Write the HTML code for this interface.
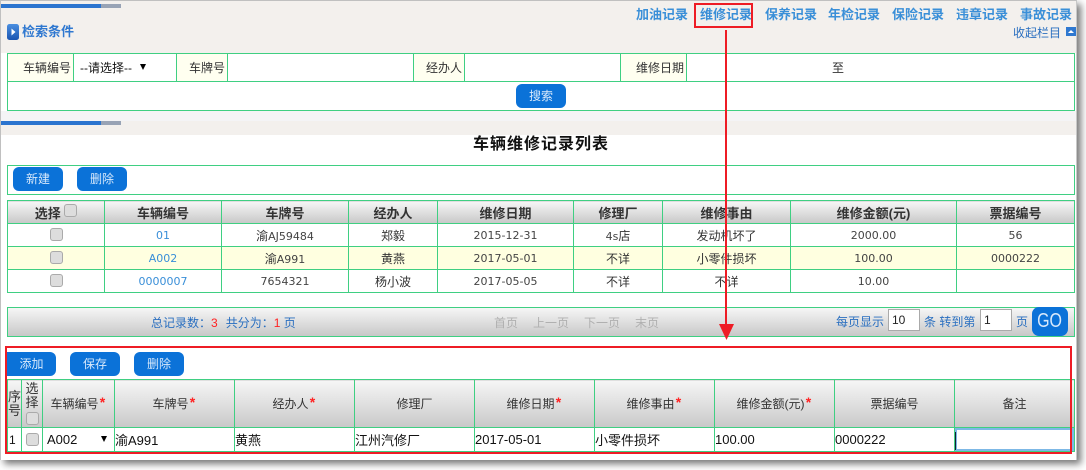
<!DOCTYPE html>
<html lang="zh">
<head>
<meta charset="utf-8">
<title>车辆维修记录列表</title>
<style>
html,body{margin:0;padding:0;width:1086px;height:470px;overflow:hidden;background:#fff}
body{font:12px "Liberation Sans","WenQuanYi Zen Hei","Noto Sans CJK SC",sans-serif;color:#333;position:relative}
.a{position:absolute;white-space:nowrap}
#page{position:absolute;left:0;top:0;width:1075px;height:459px;background:#fff;border-left:1px solid #c0c0c0;border-top:1px solid #c0c0c0;border-right:1px solid #c8c8c8;box-shadow:4px 4px 7px #777}
.bar{position:absolute;left:1px;width:120px;height:4px;background:linear-gradient(to right,#2b74cf 0,#2b74cf 100px,#98a3b5 100px,#98a3b5 120px)}
.btn{position:absolute;width:50px;height:24px;line-height:24px;background:#0b72d8;color:#d8e9fb;border-radius:6px;text-align:center;font-size:12px}
.link{position:absolute;top:7px;font-weight:bold;font-size:13px;line-height:16px;color:#3a8fd8;white-space:nowrap}
table{position:absolute;border-collapse:collapse;table-layout:fixed;left:7px}
td,th{border:1px solid #3fcf82;padding:0;text-align:center;overflow:hidden;white-space:nowrap;font-size:12px;font-weight:normal}
.lb{background:#fffff0;text-align:right;padding-right:2px}
.hd th{background:linear-gradient(#f6f6f6,#c8c8c8);font-weight:bold;font-size:13px;color:#333}
.hd2 th{background:linear-gradient(#f6f6f6,#c8c8c8);color:#333;font-weight:normal}
.y td{background:#ffffe0}
.n{font:11px "DejaVu Sans",sans-serif;color:#444}
.b{color:#3a8fd8}
.cb{display:inline-block;width:11px;height:11px;background:#ddd;border:1px solid #aaa;border-radius:3px;vertical-align:middle;position:relative;top:-1px}
.t2 td{text-align:left;color:#111;font-size:13px}
.m{font-size:12.4px}
.r{color:#f22}
.star{display:inline-block;width:8px;text-align:center;color:#f22;font-weight:bold;font-size:14px;line-height:10px;vertical-align:1px}
.tri{position:absolute;width:0;height:0;border-left:3px solid transparent;border-right:3px solid transparent;border-top:6px solid #000}
.inp{position:absolute;background:#fff;border:1px solid #aaa;height:20px;line-height:20px;width:27px;padding-left:3px;box-sizing:content-box;color:#222;font-size:12px}
.pg{color:#2a6fc0}
.dis{color:#b0b0b0}
</style>
</head>
<body>
<div id="page"></div>

<div class="a" style="left:1px;top:1px;width:1075px;height:52px;background:#f3f0ed"></div>
<div class="a" style="left:1px;top:111px;width:1075px;height:10px;background:#f4f4f6"></div>
<div class="a" style="left:1px;top:121px;width:1075px;height:14px;background:#f3f0ed"></div>
<div class="bar" style="top:4px"></div>
<div class="bar" style="top:121px"></div>

<svg class="a" style="left:7px;top:24px" width="12" height="17" viewBox="0 0 12 17">
<defs><linearGradient id="ig" x1="0" y1="0" x2="0" y2="1"><stop offset="0" stop-color="#4a8fe0"/><stop offset="1" stop-color="#1a55b0"/></linearGradient></defs>
<rect x="0" y="0" width="12" height="16" rx="2.5" fill="url(#ig)"/>
<path d="M4.5 4.5 L8.5 8 L4.5 11.5 Z" fill="#fff"/>
</svg>
<div class="a" style="left:22px;top:24px;font-weight:bold;font-size:13px;line-height:16px;color:#2f78d0">检索条件</div>

<div class="link" style="left:636px">加油记录</div>
<div class="link" style="left:700px">维修记录</div>
<div class="link" style="left:765px">保养记录</div>
<div class="link" style="left:828px">年检记录</div>
<div class="link" style="left:892px">保险记录</div>
<div class="link" style="left:956px">违章记录</div>
<div class="link" style="left:1020px">事故记录</div>
<div class="a" style="left:1013px;top:25px;line-height:16px;color:#2a6fc0">收起栏目</div>
<svg class="a" style="left:1066px;top:27px" width="10" height="9" viewBox="0 0 10 9"><rect width="10" height="9" fill="#2f78d0"/><path d="M2 6 L5 3 L8 6 Z" fill="#fff"/></svg>

<table style="top:53px;width:1068px;background:#fff">
<colgroup><col style="width:66px"><col style="width:103px"><col style="width:51px"><col style="width:186px"><col style="width:51px"><col style="width:156px"><col style="width:66px"><col style="width:388px"></colgroup>
<tr style="height:28px"><td class="lb">车辆编号</td><td style="text-align:left;padding-left:6px;color:#111">--请选择--</td><td class="lb">车牌号</td><td></td><td class="lb">经办人</td><td></td><td class="lb">维修日期</td><td style="padding-right:85px">至</td></tr>
<tr style="height:29px"><td colspan="8"></td></tr>
</table>
<div class="tri" style="left:140px;top:64px"></div>
<div class="btn" style="left:516px;top:84px">搜索</div>

<div class="a" style="left:441px;width:200px;top:135px;text-align:center;font-weight:bold;font-size:16px;line-height:20px;color:#111;letter-spacing:1px">车辆维修记录列表</div>

<div class="a" style="left:7px;top:165px;width:1066px;height:28px;border:1px solid #3fcf82"></div>
<div class="btn" style="left:13px;top:167px">新建</div>
<div class="btn" style="left:77px;top:167px">删除</div>

<table style="top:200px;width:1068px">
<colgroup><col style="width:97px"><col style="width:117px"><col style="width:127px"><col style="width:89px"><col style="width:136px"><col style="width:89px"><col style="width:128px"><col style="width:166px"><col style="width:118px"></colgroup>
<tr class="hd" style="height:23px"><th>选择 <span class="cb" style="top:-4px"></span></th><th>车辆编号</th><th>车牌号</th><th>经办人</th><th>维修日期</th><th>修理厂</th><th>维修事由</th><th>维修金额(元)</th><th>票据编号</th></tr>
<tr style="height:23px"><td><span class="cb"></span></td><td><span class="n b">01</span></td><td>渝<span class="n">AJ59484</span></td><td>郑毅</td><td><span class="n">2015-12-31</span></td><td><span class="n">4s</span>店</td><td>发动机坏了</td><td><span class="n">2000.00</span></td><td><span class="n">56</span></td></tr>
<tr class="y" style="height:23px"><td><span class="cb"></span></td><td><span class="n b">A002</span></td><td>渝<span class="n">A991</span></td><td>黄燕</td><td><span class="n">2017-05-01</span></td><td>不详</td><td>小零件损坏</td><td><span class="n">100.00</span></td><td><span class="n">0000222</span></td></tr>
<tr style="height:23px"><td><span class="cb"></span></td><td><span class="n b">0000007</span></td><td><span class="n">7654321</span></td><td>杨小波</td><td><span class="n">2017-05-05</span></td><td>不详</td><td>不详</td><td><span class="n">10.00</span></td><td></td></tr>
</table>

<div class="a" style="left:7px;top:307px;width:1066px;height:28px;border:1px solid #3fcf82;background:linear-gradient(#f6f6f6,#c8c8c8)"></div>
<div class="a pg" style="left:151px;top:315px;line-height:16px">总记录数：<span class="r">3</span><span style="margin-left:8px">共分为：</span><span class="r">1</span> 页</div>
<div class="a dis" style="left:494px;top:315px;line-height:16px">首页</div>
<div class="a dis" style="left:533px;top:315px;line-height:16px">上一页</div>
<div class="a dis" style="left:584px;top:315px;line-height:16px">下一页</div>
<div class="a dis" style="left:635px;top:315px;line-height:16px">末页</div>
<div class="a pg" style="left:836px;top:314px;line-height:16px">每页显示</div>
<div class="inp" style="left:888px;top:309px">10</div>
<div class="a pg" style="left:924px;top:314px;line-height:16px">条 转到第</div>
<div class="inp" style="left:980px;top:309px">1</div>
<div class="a pg" style="left:1016px;top:314px;line-height:16px">页</div>
<div class="a" style="left:1032px;top:307px;width:36px;height:29px;background:#0b72d8;border-radius:7px;color:#d8e9fb;text-align:center"><span style="display:inline-block;font:20px/29px 'Liberation Sans',sans-serif;transform:scaleX(.8)">GO</span></div>

<table class="t2" style="top:379px;width:1068px">
<colgroup><col style="width:14px"><col style="width:21px"><col style="width:72px"><col style="width:120px"><col style="width:120px"><col style="width:120px"><col style="width:120px"><col style="width:120px"><col style="width:120px"><col style="width:120px"><col style="width:120px"></colgroup>
<tr class="hd2" style="height:48px"><th style="line-height:14px;white-space:normal;font-size:13px">序号</th><th style="line-height:14px;white-space:normal;font-size:13px">选<br>择<br><span class="cb" style="top:0"></span></th><th>车辆编号<span class="star">*</span></th><th>车牌号<span class="star">*</span></th><th>经办人<span class="star">*</span></th><th>修理厂</th><th>维修日期<span class="star">*</span></th><th>维修事由<span class="star">*</span></th><th>维修金额(元)<span class="star">*</span></th><th>票据编号</th><th>备注</th></tr>
<tr style="height:24px"><td style="padding-left:1px;font-size:12px">1</td><td style="text-align:center"><span class="cb"></span></td><td style="padding-left:4px">A002</td><td>渝A991</td><td>黄燕</td><td>江州汽修厂</td><td class="m">2017-05-01</td><td>小零件损坏</td><td class="m">100.00</td><td class="m">0000222</td><td></td></tr>
</table>
<div class="tri" style="left:101px;top:436px"></div>
<div class="a" style="left:955px;top:428px;width:115px;height:19px;border:2px solid #7db8e6;background:#fff"></div>
<div class="a" style="left:955px;top:432px;width:1px;height:18px;background:#123"></div>

<div class="a" style="left:5px;top:346px;width:1063px;height:104px;border:2px solid #ee1c25"></div>
<div class="btn" style="left:7px;top:352px;width:49px;border-radius:0 6px 6px 0">添加</div>
<div class="btn" style="left:70px;top:352px">保存</div>
<div class="btn" style="left:134px;top:352px">删除</div>

<div class="a" style="left:694px;top:3px;width:55px;height:21px;border:2px solid #ee1c25"></div>
<div class="a" style="left:725px;top:30px;width:2px;height:296px;background:#ee1c25"></div>
<svg class="a" style="left:719px;top:324px" width="16" height="17" viewBox="0 0 16 17"><path d="M0 0 H15 L7.5 16 Z" fill="#ee1c25"/></svg>
</body>
</html>
